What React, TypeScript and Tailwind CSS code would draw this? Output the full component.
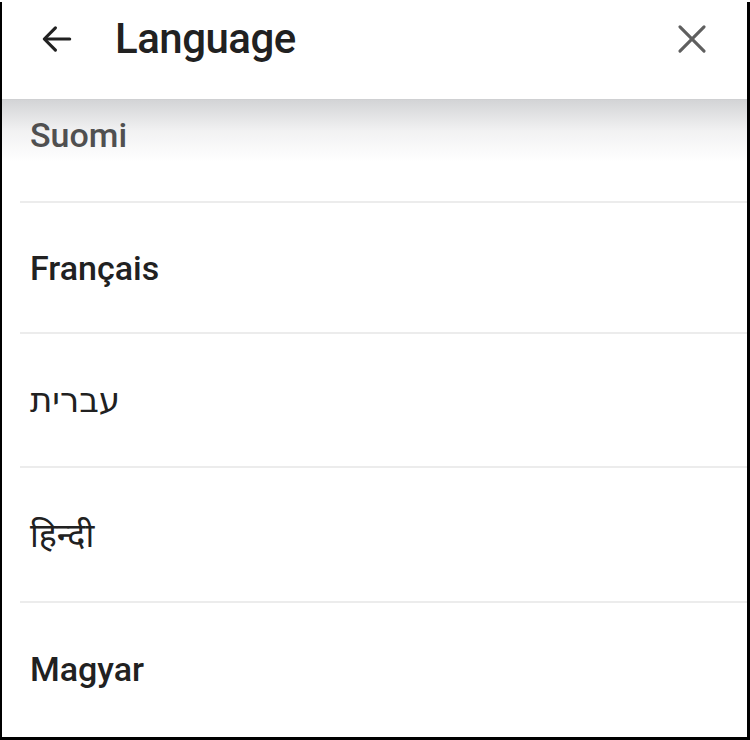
import React from 'react';

const languages = [
  { label: 'Suomi', h: 'h-[133px]' },
  { label: 'Français', h: 'h-[131px]' },
  { label: 'עברית', h: 'h-[134px]' },
  { label: 'हिन्दी', h: 'h-[135px]' },
  { label: 'Magyar', h: 'h-[134px]' },
];

export default function App() {
  return (
    <div className="w-[750px] h-[740px] bg-black" style={{ fontFamily: 'Roboto, "Noto Sans", "DejaVu Sans", sans-serif' }}>
      <div className="ml-[2px] mt-[2px] w-[745px] h-[735px] bg-white flex flex-col overflow-hidden">
        {/* Header */}
        <div className="h-[98px] shrink-0 flex items-start pt-[16px] border-b border-[#cfd0d2] relative z-20 bg-white">
          <button className="ml-[34px] w-[42px] h-[42px] flex items-center justify-center text-[#212121]">
            <svg width="38" height="38" viewBox="0 0 24 24" fill="none" stroke="currentColor" strokeWidth="2" strokeLinecap="round" strokeLinejoin="round">
              <path d="M20 12H4.5" />
              <path d="M11 5l-7 7 7 7" />
            </svg>
          </button>
          <h1 className="ml-[37px] text-[42px] font-medium text-[#212121] tracking-[-0.5px] leading-[42px]">Language</h1>
          <button className="ml-auto mr-[34px] w-[42px] h-[42px] flex items-center justify-center text-[#5f5f5f]">
            <svg width="34" height="34" viewBox="0 0 24 24" fill="none" stroke="currentColor" strokeWidth="2.2" strokeLinecap="round">
              <path d="M3.5 3.5l17 17" />
              <path d="M20.5 3.5l-17 17" />
            </svg>
          </button>
        </div>

        {/* List */}
        <div className="relative flex-1 overflow-hidden">
          <div className="absolute top-0 left-0 right-0 h-[62px] bg-gradient-to-b from-[#d3d4d6] via-[#ececed]/70 to-white/0 pointer-events-none" />
          <div className="relative -mt-[32px]">
            {languages.map((lang, i) => (
              <div key={lang.label} className={lang.h + (i === 0 ? '' : ' ml-[18px] border-t-2 border-[#ececec]')}>
                <div className={'h-full flex items-center ' + (i === 0 ? 'pl-[28px]' : 'pl-[10px]')}>
                  <span className={'text-[34px] leading-none ' + (i === 0 ? 'text-[#505050] font-medium' : i === 2 || i === 3 ? 'text-[#212121] font-normal' : 'text-[#212121] font-medium')}>
                    {lang.label}
                  </span>
                </div>
              </div>
            ))}
          </div>
        </div>
      </div>
    </div>
  );
}
